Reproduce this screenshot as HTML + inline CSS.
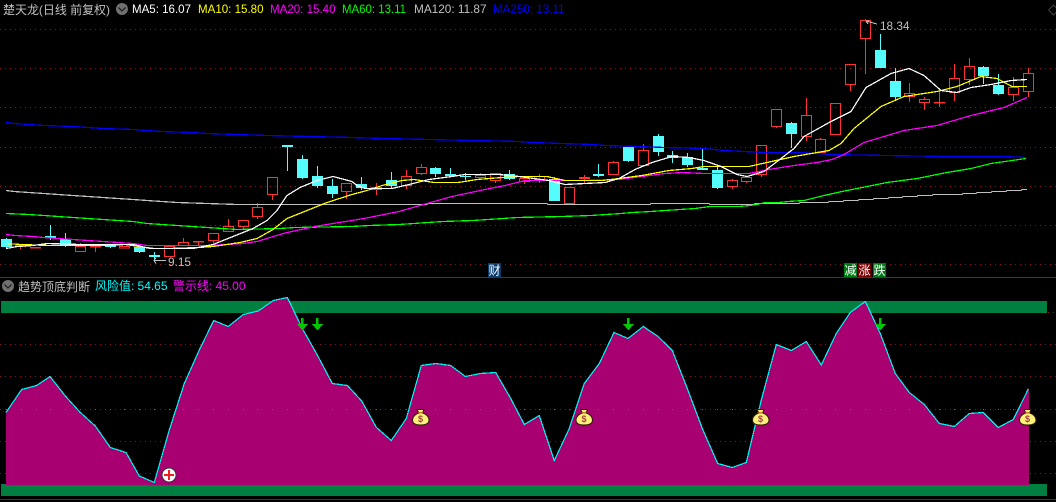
<!DOCTYPE html>
<html><head><meta charset="utf-8"><title>楚天龙</title>
<style>
html,body{margin:0;padding:0;background:#000;width:1056px;height:502px;overflow:hidden}
svg{display:block;position:absolute;left:0;top:0}
text{font-family:"Liberation Sans","WenQuanYi Zen Hei","Noto Sans CJK SC",sans-serif;font-size:12px}
</style></head><body>
<svg width="1056" height="502" viewBox="0 0 1056 502" xmlns="http://www.w3.org/2000/svg">
<rect width="1056" height="502" fill="#000"/>
<g shape-rendering="crispEdges">
<!-- grid -->
<path d="M0 29.5H1056M0 68.5H1056M0 107.5H1056M0 147.5H1056M0 186.5H1056M0 225.5H1056M0 264.5H1056M0 344.5H1056M0 376.5H1056M0 409.5H1056M0 441.5H1056M0 473.5H1056M1048 312.5H1056" stroke="#8a1414" stroke-width="1" stroke-dasharray="1 4" fill="none"/>
<rect x="0" y="277" width="1056" height="1" fill="#c00000"/>
<rect x="0" y="499" width="1056" height="1" fill="#c00000"/>
<!-- red candles -->
<path fill="none" stroke="#ff3232" stroke-width="1.1" d="M15.5 245.5h10v1h-10zM20.5 247V249M30.5 247.5h10v0.5h-10z
M75.5 246.5h10v5h-10zM80.5 243V246M90.5 246.5h10v0.5h-10zM95.5 247V252M119.5 246.5h10v1.5h-10z
M164.5 246.5h10v10h-10zM178.5 242.5h10v3h-10zM183.5 238V242M193.5 241.5h10v0.5h-10zM198.5 242V245
M208.5 233.5h10v7h-10zM213.5 241V243M223.5 226.5h10v5h-10zM228.5 219V226M238.5 220.5h10v6h-10zM243.5 227V229
M252.5 207.5h10v9h-10zM257.5 203V207M257.5 217V219M267.5 177.5h10v17h-10zM272.5 195V200
M341.5 183.5h10v8h-10zM346.5 192V199M371.5 187.5h10v2h-10zM376.5 183V187M376.5 190V195
M401.5 176.5h10v9h-10zM406.5 170V176M406.5 186V189M416.5 167.5h10v6h-10zM421.5 164V167M421.5 174V175
M475.5 175.5h10v2h-10zM480.5 173V175M490.5 173.5h10v7h-10zM495.5 181V183M519.5 178.5h10v3h-10zM524.5 182V184
M534.5 176.5h10v3h-10zM539.5 174V176M539.5 180V183M564.5 187.5h10v16h-10zM579.5 177.5h10v1h-10zM584.5 175V177M584.5 179V184
M608.5 162.5h10v12h-10zM613.5 161V162M638.5 150.5h10v15h-10zM643.5 144V150
M727.5 180.5h10v6h-10zM732.5 179V180M732.5 187V189M741.5 177.5h10v4h-10zM746.5 176V177M746.5 182V183
M756.5 145.5h10v29h-10zM761.5 175V177M771.5 109.5h10v17h-10zM776.5 127V128
M801.5 115.5h10v21h-10zM806.5 98V115M806.5 137V141M815.5 139.5h10v13h-10zM820.5 138V139
M830.5 103.5h10v31h-10zM845.5 64.5h10v20h-10zM850.5 85V91M860.5 20.5h10v18h-10zM865.5 19V20M865.5 39V74
M904.5 93.5h10v3h-10zM909.5 83V93M909.5 97V102M919.5 99.5h10v3h-10zM924.5 97V99M924.5 103V110
M934.5 102.5h10v0.5h-10zM939.5 91V102M939.5 103V107M949.5 78.5h10v14h-10zM954.5 64V78M954.5 93V101
M964.5 66.5h10v13h-10zM969.5 58V66M969.5 80V85M1008.5 87.5h10v7h-10zM1013.5 77V87M1013.5 95V101
M1023.5 73.5h10v18h-10zM1028.5 68V73M1028.5 92V97"/>
<!-- cyan wicks -->
<path fill="none" stroke="#54fcfc" stroke-width="1" d="M6.5 238V248M50.5 225V240M65.5 233V247M110.5 244V248M139.5 245V253M154.5 252V262M287.5 146V171M302.5 155V179M317.5 166V188M332.5 179V198M361.5 177V190M391.5 172V188M435.5 167V177M450.5 168V177M465.5 173V180M509.5 170V180M554.5 177V201M598.5 164V177M628.5 147V162M658.5 134V156M672.5 151V163M687.5 153V167M702.5 149V170M717.5 166V189M791.5 122V148M880.5 34V68M895.5 68V100M983.5 66V84M998.5 74V95"/>
<!-- cyan bodies -->
<path fill="#54fcfc" d="M1 239h11v8h-11zM45 236h11v2h-11zM60 239h11v6h-11zM105 245h11v2h-11zM134 247h11v5h-11zM149 255h11v2h-11zM282 145h11v2h-11zM297 159h11v19h-11zM312 176h11v10h-11zM327 186h11v8h-11zM356 184h11v4h-11zM386 180h11v6h-11zM430 168h11v6h-11zM445 174h11v2h-11zM460 176h11v1h-11zM504 174h11v5h-11zM549 179h11v22h-11zM593 174h11v2h-11zM623 147h11v14h-11zM653 136h11v16h-11zM667 155h11v3h-11zM682 157h11v8h-11zM697 168h11v2h-11zM712 170h11v18h-11zM786 123h11v11h-11zM875 50h11v18h-11zM890 81h11v16h-11zM978 67h11v9h-11zM993 85h11v9h-11z"/>
<!-- MA lines -->
<g fill="none" stroke-width="1.25">
<polyline stroke="#0000ff" points="6,122.5 14,123.5 29,124.5 44,125.5 73,126.5 88,127.5 103,128.5 133,129.5 147,130.5 162,131.5 192,132.5 207,133.5 237,134.5 267,135.5 310,136.5 352,137.5 384,138.5 429,139.5 473,140.5 519,141.5 532,142.5 562,143.5 592,144.5 605,145.5 637,146.5 665,147.5 704,148.5 724,150.5 764,152.5 801,152.5 831,154.5 887,155.5 947,156.5 1004,156.5 1027,157.5"/>
<polyline stroke="#c0c0c0" points="6,190.5 14,191.5 29,192.5 44,193.5 58,194.5 73,195.5 88,196.5 103,197.5 118,198.5 133,199.5 147,200.5 162,201.5 177,202.5 207,203.5 237,204.5 427,204.5 428,203.5 547,203.5 548,204.5 650,204.5 651,203.5 709,203.5 710,204.5 754,204.5 755,203.5 799,203.5 800,202.5 828,202.5 829,201.5 843,201.5 844,200.5 858,200.5 859,199.5 873,199.5 874,198.5 888,198.5 889,197.5 902,197.5 903,196.5 917,196.5 918,195.5 932,195.5 933,194.5 962,194.5 963,193.5 976,193.5 977,192.5 991,192.5 992,191.5 1006,191.5 1007,190.5 1021,190.5 1022,189.5 1027,189.5"/>
<polyline stroke="#00ff00" points="6,213.5 29,214.5 44,215.5 58,216.5 73,217.5 88,218.5 103,219.5 118,220.5 133,221.5 147,223.5 162,224.5 177,225.5 192,226.5 207,227.5 222,228.5 237,229.5 280,228.5 295,227.5 352,226.5 369,225.5 399,224.5 414,223.5 428,222.5 443,221.5 473,220.5 488,219.5 503,218.5 517,217.5 562,216.5 591,215.5 606,214.5 621,213.5 632,212.5 651,211.5 665,210.5 680,209.5 695,208.5 710,206.5 739,206.5 750,205.5 757,204.5 765,202.5 779,202.5 788,201.5 804,200.5 824,195.5 842,191.5 857,188.5 872,185.5 887,182.5 917,178.5 947,172.5 971,168.5 991,163.5 1026,158.5"/>
<polyline stroke="#ff00ff" points="6,234.5 15,235.5 33,236.5 43,237.5 58,238.5 73,239.5 88,240.5 103,241.5 118,242.5 133,243.5 147,245.5 177,245.5 207,245.5 227,244.5 243,243.5 257,241.5 270,237.5 287,232.5 315,226.5 333,223.5 352,220.5 369,217.5 399,211.5 427,203.5 452,196.5 485,189.5 505,185.5 525,180.5 549,180.5 585,180.5 619,179.5 642,176.5 665,173.5 682,172.5 704,173.5 749,173.5 769,169.5 794,165.5 817,162.5 832,159.5 844,154.5 864,142.5 884,136.5 904,130.5 937,125.5 971,115.5 1004,107.5 1027,97.5"/>
<polyline stroke="#ffff00" points="6,243.5 21,244.5 50,245.5 110,245.5 125,244.5 139,246.5 154,248.5 169,248.5 199,247.5 213,246.5 227,244.5 240,242.5 257,238.5 273,229.5 287,218.5 307,210.5 327,202.5 352,194.5 367,190.5 382,185.5 402,180.5 414,179.5 434,182.5 458,182.5 477,179.5 502,177.5 519,176.5 547,176.5 565,180.5 602,180.5 619,178.5 642,175.5 669,170.5 692,168.5 704,166.5 749,166.5 767,162.5 794,156.5 817,152.5 829,150.5 841,143.5 854,128.5 881,106.5 904,96.5 937,91.5 957,86.5 981,76.5 997,78.5 1012,86.5 1027,86.5"/>
<polyline stroke="#ffffff" points="6,248.5 17,246.5 33,245.5 47,243.5 80,244.5 133,244.5 150,248.5 193,248.5 213,244.5 233,236.5 253,228.5 267,220.5 277,210.5 287,195.5 300,187.5 317,180.5 333,176.5 352,181.5 357,185.5 365,188.5 392,188.5 409,184.5 429,179.5 452,176.5 465,174.5 499,174.5 519,176.5 549,180.5 565,184.5 605,182.5 619,178.5 635,169.5 652,162.5 672,156.5 689,157.5 704,160.5 721,166.5 737,174.5 747,176.5 764,171.5 781,158.5 794,148.5 804,136.5 831,121.5 851,111.5 866,87.5 891,73.5 909,68.5 924,75.5 941,90.5 957,92.5 971,87.5 991,84.5 1011,80.5 1027,79.5"/>
</g>
<!-- 18.34 / 9.15 markers -->
<path fill="none" stroke="#c0c0c0" d="M866 21L877 24M866 21h3M866 21l2 3M154 260.5H166M154 260.5l2 -3M154 260.5l2 3"/>
<!-- tag backgrounds -->
<rect x="488" y="263" width="13" height="14" fill="#0a3c6e"/>
<rect x="844" y="263" width="13" height="14" fill="#007a14"/>
<rect x="858" y="263" width="13" height="14" fill="#7a0000"/>
<rect x="873" y="263" width="13" height="14" fill="#007a14"/>
<!-- green bands -->
<rect x="1" y="301" width="1046" height="12" fill="#008040"/>
<rect x="1" y="484" width="1046" height="12" fill="#008040"/>
<!-- risk fill -->
<polygon fill="#a80070" points="6,485 6,412.5 21.7,389.5 36.7,385.5 50,376.5 65.3,396 80.3,412.5 95.3,426 110.3,447.5 126,452.5 139.3,476 154.3,482.5 169.3,430 184.3,383.5 199.3,350 213.7,320.5 228.3,326.5 243.3,314.5 258.3,311 273.3,300.5 287.3,297.5 302.3,328.5 317.3,355 332.3,383.5 347.3,385.5 352,390.5 361.7,401 376.4,427.5 391.3,440.5 406.3,418.5 421.3,365.5 435.7,363.5 450.7,365.5 465.3,376.5 480.3,373.5 495.7,372.5 510.7,398.5 524.3,424.5 539.3,415.5 554.3,460.5 569.3,428.5 584.3,383.5 599.3,363.5 614,332.5 628,338.5 643.3,326.5 658,336.5 672.3,350.5 687.3,388.5 702.7,429.5 717.7,463.5 732.3,467.5 746.3,462.5 761.3,400 776.3,344.5 791.3,350.5 806.3,341.5 821.3,365 836.3,333.5 850.3,312.5 865.3,301.5 880.3,333.5 895.3,373.5 909.3,392.5 924.3,404.5 939.3,423.5 954.3,426.5 969.3,413.5 983.3,412.5 998.3,427.5 1013.3,419.5 1028.3,389 1029,389 1029,485"/>
<polyline fill="none" stroke="#00f0f0" stroke-width="1.25" points="6,412.5 21.7,389.5 36.7,385.5 50,376.5 65.3,396 80.3,412.5 95.3,426 110.3,447.5 126,452.5 139.3,476 154.3,482.5 169.3,430 184.3,383.5 199.3,350 213.7,320.5 228.3,326.5 243.3,314.5 258.3,311 273.3,300.5 287.3,297.5 302.3,328.5 317.3,355 332.3,383.5 347.3,385.5 352,390.5 361.7,401 376.4,427.5 391.3,440.5 406.3,418.5 421.3,365.5 435.7,363.5 450.7,365.5 465.3,376.5 480.3,373.5 495.7,372.5 510.7,398.5 524.3,424.5 539.3,415.5 554.3,460.5 569.3,428.5 584.3,383.5 599.3,363.5 614,332.5 628,338.5 643.3,326.5 658,336.5 672.3,350.5 687.3,388.5 702.7,429.5 717.7,463.5 732.3,467.5 746.3,462.5 761.3,400 776.3,344.5 791.3,350.5 806.3,341.5 821.3,365 836.3,333.5 850.3,312.5 865.3,301.5 880.3,333.5 895.3,373.5 909.3,392.5 924.3,404.5 939.3,423.5 954.3,426.5 969.3,413.5 983.3,412.5 998.3,427.5 1013.3,419.5 1028.3,389"/>
<!-- magenta 45 line dots -->
<path stroke="#ff00ff" stroke-width="1" fill="none" d="M6 409.5h1M21 409.5h1M36 409.5h1M50 409.5h1M65 409.5h1M80 409.5h1M95 409.5h1M110 409.5h1M124 409.5h1M139 409.5h1M154 409.5h1M169 409.5h1M183 409.5h1M198 409.5h1M213 409.5h1M228 409.5h1M243 409.5h1M257 409.5h1M272 409.5h1M287 409.5h1M302 409.5h1M317 409.5h1M332 409.5h1M346 409.5h1M361 409.5h1M376 409.5h1M391 409.5h1M406 409.5h1M421 409.5h1M435 409.5h1M450 409.5h1M465 409.5h1M480 409.5h1M495 409.5h1M509 409.5h1M524 409.5h1M539 409.5h1M554 409.5h1M569 409.5h1M584 409.5h1M598 409.5h1M613 409.5h1M628 409.5h1M643 409.5h1M658 409.5h1M672 409.5h1M687 409.5h1M702 409.5h1M717 409.5h1M732 409.5h1M746 409.5h1M761 409.5h1M776 409.5h1M791 409.5h1M806 409.5h1M820 409.5h1M835 409.5h1M850 409.5h1M865 409.5h1M880 409.5h1M895 409.5h1M909 409.5h1M924 409.5h1M939 409.5h1M954 409.5h1M969 409.5h1M983 409.5h1M998 409.5h1M1013 409.5h1M1028 409.5h1"/>
<!-- green arrows -->
<path fill="#00c800" d="M301 318h2.5v6h4.5l-5.5 6.5l-5.5 -6.5h4zM316 318h2.5v6h4.5l-5.5 6.5l-5.5 -6.5h4zM627 318h2.5v6h4.5l-5.5 6.5l-5.5 -6.5h4zM879 318h2.5v6h4.5l-5.5 6.5l-5.5 -6.5h4z"/>
</g>
<!-- diamond top right -->
<path d="M1048.5 10l5 -5l3 3M1048.5 10l5 5l3 -3" stroke="#404040" fill="none"/>
<!-- plus icon -->
<circle cx="169" cy="475" r="7" fill="#fff" stroke="#333" stroke-width="1"/>
<path d="M164 475h10M169 470v10" stroke="#f02020" stroke-width="2.4" shape-rendering="crispEdges"/>
<!-- money bags -->
<g transform="translate(420.5 417)">
<path d="M-3.5 -7.5h7l-1.5 3.5c4 1 6.5 4 6.5 7c0 3.5 -3 5 -8.5 5s-8 -1.5 -8 -5c0 -3 2.5 -6 6.5 -7z" fill="#fff07a" stroke="#2a1c08" stroke-width="1"/>
<path d="M-2.5 -4.2h5" stroke="#b06020" stroke-width="1.2"/>
<text x="0" y="5" text-anchor="middle" fill="#a04040" style="font-size:9px;font-weight:bold">$</text>
</g>
<g transform="translate(584 417)">
<path d="M-3.5 -7.5h7l-1.5 3.5c4 1 6.5 4 6.5 7c0 3.5 -3 5 -8.5 5s-8 -1.5 -8 -5c0 -3 2.5 -6 6.5 -7z" fill="#fff07a" stroke="#2a1c08" stroke-width="1"/>
<path d="M-2.5 -4.2h5" stroke="#b06020" stroke-width="1.2"/>
<text x="0" y="5" text-anchor="middle" fill="#a04040" style="font-size:9px;font-weight:bold">$</text>
</g>
<g transform="translate(760.5 417)">
<path d="M-3.5 -7.5h7l-1.5 3.5c4 1 6.5 4 6.5 7c0 3.5 -3 5 -8.5 5s-8 -1.5 -8 -5c0 -3 2.5 -6 6.5 -7z" fill="#fff07a" stroke="#2a1c08" stroke-width="1"/>
<path d="M-2.5 -4.2h5" stroke="#b06020" stroke-width="1.2"/>
<text x="0" y="5" text-anchor="middle" fill="#a04040" style="font-size:9px;font-weight:bold">$</text>
</g>
<g transform="translate(1027.5 417)">
<path d="M-3.5 -7.5h7l-1.5 3.5c4 1 6.5 4 6.5 7c0 3.5 -3 5 -8.5 5s-8 -1.5 -8 -5c0 -3 2.5 -6 6.5 -7z" fill="#fff07a" stroke="#2a1c08" stroke-width="1"/>
<path d="M-2.5 -4.2h5" stroke="#b06020" stroke-width="1.2"/>
<text x="0" y="5" text-anchor="middle" fill="#a04040" style="font-size:9px;font-weight:bold">$</text>
</g>
<!-- header icons -->
<circle cx="122" cy="9" r="6" fill="#707070"/>
<path d="M118.5 7.5l3.5 3.5l3.5 -3.5" fill="none" stroke="#222" stroke-width="1.3"/>
<circle cx="8" cy="286" r="6" fill="#707070"/>
<path d="M4.5 284.5l3.5 3.5l3.5 -3.5" fill="none" stroke="#222" stroke-width="1.3"/>
<!-- labels -->
<text x="3" y="14" fill="#c0c0c0" textLength="107" lengthAdjust="spacing">楚天龙(日线 前复权)</text>
<text x="132" y="13" fill="#ffffff" textLength="59" lengthAdjust="spacingAndGlyphs">MA5: 16.07</text>
<text x="198" y="13" fill="#ffff00" textLength="65.5" lengthAdjust="spacingAndGlyphs">MA10: 15.80</text>
<text x="270" y="13" fill="#ff00ff" textLength="65.5" lengthAdjust="spacingAndGlyphs">MA20: 15.40</text>
<text x="342" y="13" fill="#00ff00" textLength="64" lengthAdjust="spacingAndGlyphs">MA60: 13.11</text>
<text x="414" y="13" fill="#c0c0c0" textLength="72.5" lengthAdjust="spacingAndGlyphs">MA120: 11.87</text>
<text x="493" y="13" fill="#0000ff" textLength="71.5" lengthAdjust="spacingAndGlyphs">MA250: 13.11</text>
<text x="880" y="30" fill="#c0c0c0" textLength="29.5" lengthAdjust="spacingAndGlyphs">18.34</text>
<text x="168" y="266" fill="#c0c0c0" textLength="23" lengthAdjust="spacingAndGlyphs">9.15</text>
<text x="488.5" y="274.5" fill="#fff">财</text>
<text x="844.5" y="274.5" fill="#fff">减</text>
<text x="858.5" y="274.5" fill="#fff">涨</text>
<text x="873.5" y="274.5" fill="#fff">跌</text>
<text x="18" y="291" fill="#c0c0c0">趋势顶底判断</text>
<text x="95" y="290" fill="#00ffff" textLength="72.5" lengthAdjust="spacing">风险值: 54.65</text>
<text x="173" y="290" fill="#ff00ff" textLength="72.5" lengthAdjust="spacing">警示线: 45.00</text>
</svg>
</body></html>
